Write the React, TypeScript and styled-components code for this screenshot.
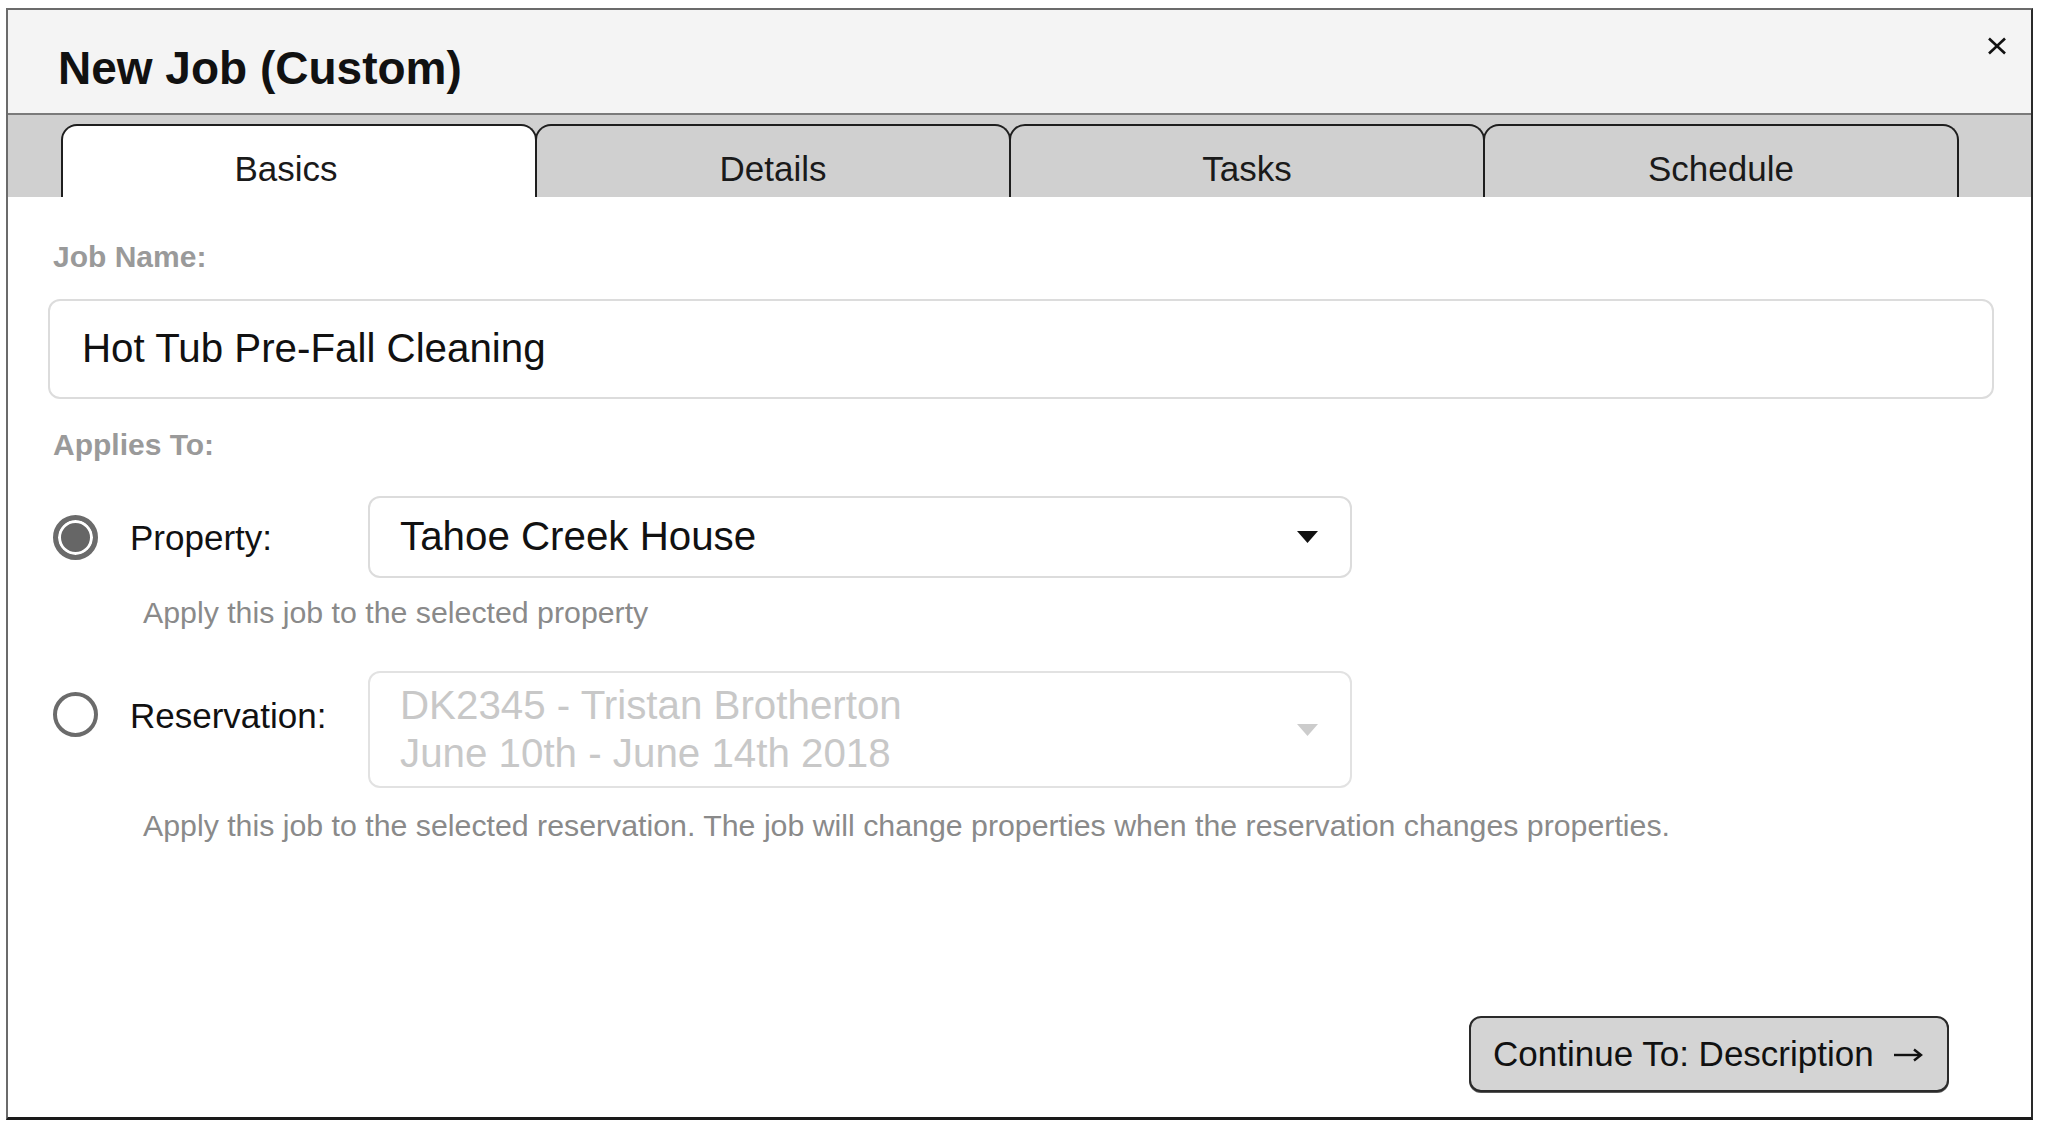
import React from "react";
import styled, { createGlobalStyle } from "styled-components";

const GlobalStyle = createGlobalStyle`
  html, body {
    margin: 0;
    padding: 0;
    background: #ffffff;
  }
  body {
    font-family: "Liberation Sans", Arial, Helvetica, sans-serif;
    color: #111;
  }
  * { box-sizing: border-box; }
`;

const Page = styled.div`
  padding: 8px 0 0 6px;
`;

const Frame = styled.div`
  width: 2027px;
  height: 1112px;
  display: flex;
  flex-direction: column;
  border: 2px solid #6b6b6b;
  border-right-color: #2a2a2a;
  border-bottom: 3px solid #1a1a1a;
  background: #fff;
`;

const Header = styled.div`
  height: 105px;
  flex: none;
  display: flex;
  align-items: flex-start;
  justify-content: space-between;
  background: #f4f4f4;
  border-bottom: 2px solid #7a7a7a;
  padding: 0 24px 0 50px;
`;

const Title = styled.h1`
  margin: 0;
  padding-top: 33px;
  font-size: 46px;
  line-height: 50px;
  font-weight: 700;
  color: #111;
`;

const CloseButton = styled.button`
  margin-top: 27px;
  padding: 0;
  width: 20px;
  height: 18px;
  border: none;
  background: transparent;
  cursor: pointer;
  display: flex;
  svg { display: block; }
`;

const TabBar = styled.div`
  height: 82px;
  flex: none;
  display: flex;
  align-items: flex-end;
  background: #d0d0d0;
  padding: 0 0 0 53px;
`;

const Tab = styled.div<{ $active?: boolean }>`
  width: 476px;
  height: 73px;
  margin-left: -2px;
  &:first-child { margin-left: 0; }
  display: flex;
  align-items: center;
  justify-content: center;
  padding-top: 14px;
  padding-right: ${(p) => (p.$active ? "26px" : "0")};
  border: 2px solid #1e1e1e;
  border-bottom: none;
  border-radius: 16px 16px 0 0;
  background: ${(p) => (p.$active ? "#ffffff" : "#d0d0d0")};
  font-size: 35px;
  line-height: 40px;
  color: #1a1a1a;
  position: relative;
  z-index: ${(p) => (p.$active ? 1 : 0)};
`;

const Content = styled.div`
  flex: 1;
  display: flex;
  flex-direction: column;
  padding: 42px 37px 25px 40px;
  background: #fff;
`;

const FieldLabel = styled.div<{ $mt?: number }>`
  margin: ${(p) => p.$mt ?? 0}px 0 0 5px;
  font-size: 30px;
  line-height: 36px;
  font-weight: 700;
  color: #9a9a9a;
`;

const TextInput = styled.div`
  margin-top: 24px;
  height: 100px;
  display: flex;
  align-items: center;
  padding-left: 32px;
  border: 2px solid #dcdcdc;
  border-radius: 12px;
  font-size: 40.3px;
  color: #111;
`;

const OptionRow = styled.div<{ $mt: number; $top?: boolean }>`
  margin-top: ${(p) => p.$mt}px;
  padding-left: 5px;
  display: grid;
  grid-template-columns: 77px 238px 984px;
  align-items: ${(p) => (p.$top ? "start" : "center")};
`;

const Radio = styled.span<{ $checked?: boolean; $offset?: number }>`
  display: block;
  width: 45px;
  height: 45px;
  border-radius: 50%;
  margin-top: ${(p) => p.$offset ?? 0}px;
  border: ${(p) => (p.$checked ? "5px" : "4px")} solid #6b6b6b;
  background: ${(p) => (p.$checked ? "#666666" : "#ffffff")};
  box-shadow: ${(p) => (p.$checked ? "inset 0 0 0 3px #ffffff" : "none")};
`;

const OptionLabel = styled.span<{ $offset?: number }>`
  display: block;
  margin-top: ${(p) => p.$offset ?? 0}px;
  font-size: 35px;
  line-height: 45px;
  color: #111;
`;

const SelectBox = styled.div<{ $disabled?: boolean }>`
  display: flex;
  align-items: center;
  justify-content: space-between;
  min-height: 82px;
  padding: ${(p) => (p.$disabled ? "9px 32px 8px 30px" : "0 32px 0 30px")};
  border: 2px solid ${(p) => (p.$disabled ? "#e2e2e2" : "#dcdcdc")};
  border-radius: 12px;
  font-size: 40.3px;
  line-height: 48px;
  color: ${(p) => (p.$disabled ? "#c8c8c8" : "#111")};
`;

const SelectText = styled.div`
  display: flex;
  flex-direction: column;
`;

const Caret = styled.svg`
  flex: none;
  display: block;
`;

const HelpText = styled.div<{ $mt: number }>`
  margin: ${(p) => p.$mt}px 0 0 95px;
  font-size: 30.3px;
  line-height: 36px;
  color: #8a8a8a;
`;

const Footer = styled.div`
  margin-top: auto;
  display: flex;
  justify-content: flex-end;
  padding-right: 45px;
`;

const ContinueButton = styled.button`
  width: 480px;
  height: 76px;
  padding: 0 0 0 22px;
  display: flex;
  align-items: center;
  border: 2px solid #2a2a2a;
  border-radius: 12px;
  background: #d4d4d4;
  font-family: "Liberation Sans", Arial, Helvetica, sans-serif;
  font-size: 35px;
  color: #111;
  cursor: pointer;
  box-shadow: 0 1px 0 #555;
`;

const ArrowIcon = styled.svg`
  display: block;
  margin-left: 20px;
  margin-top: 2px;
  flex: none;
`;

const CaretIcon = ({ color }: { color: string }) => (
  <Caret width="21" height="12" viewBox="0 0 21 12">
    <polygon points="0,0 21,0 10.5,12" fill={color} />
  </Caret>
);

const tabs = ["Basics", "Details", "Tasks", "Schedule"];

export default function App() {
  return (
    <>
      <GlobalStyle />
      <Page>
        <Frame>
          <Header>
            <Title>New Job (Custom)</Title>
            <CloseButton aria-label="Close">
              <svg width="20" height="18" viewBox="0 0 20 18">
                <line x1="2" y1="1.5" x2="18" y2="16.5" stroke="#111" strokeWidth="2.6" />
                <line x1="18" y1="1.5" x2="2" y2="16.5" stroke="#111" strokeWidth="2.6" />
              </svg>
            </CloseButton>
          </Header>
          <TabBar>
            {tabs.map((t, i) => (
              <Tab key={t} $active={i === 0}>
                {t}
              </Tab>
            ))}
          </TabBar>
          <Content>
            <FieldLabel>Job Name:</FieldLabel>
            <TextInput>Hot Tub Pre-Fall Cleaning</TextInput>
            <FieldLabel $mt={28}>Applies To:</FieldLabel>

            <OptionRow $mt={33}>
              <Radio $checked />
              <OptionLabel>Property:</OptionLabel>
              <SelectBox>
                <SelectText>Tahoe Creek House</SelectText>
                <CaretIcon color="#111" />
              </SelectBox>
            </OptionRow>
            <HelpText $mt={17}>Apply this job to the selected property</HelpText>

            <OptionRow $mt={40} $top>
              <Radio $offset={21} />
              <OptionLabel $offset={22}>Reservation:</OptionLabel>
              <SelectBox $disabled>
                <SelectText>
                  <span>DK2345 - Tristan Brotherton</span>
                  <span>June 10th - June 14th 2018</span>
                </SelectText>
                <CaretIcon color="#cccccc" />
              </SelectBox>
            </OptionRow>
            <HelpText $mt={20}>
              Apply this job to the selected reservation. The job will change properties when the reservation changes properties.
            </HelpText>

            <Footer>
              <ContinueButton>
                Continue To: Description
                <ArrowIcon width="29" height="14" viewBox="0 0 29 14" aria-hidden="true">
                  <line x1="0" y1="7" x2="26" y2="7" stroke="#111" strokeWidth="2.4" />
                  <polyline points="20,1.5 27,7 20,12.5" fill="none" stroke="#111" strokeWidth="2.4" />
                </ArrowIcon>
              </ContinueButton>
            </Footer>
          </Content>
        </Frame>
      </Page>
    </>
  );
}
